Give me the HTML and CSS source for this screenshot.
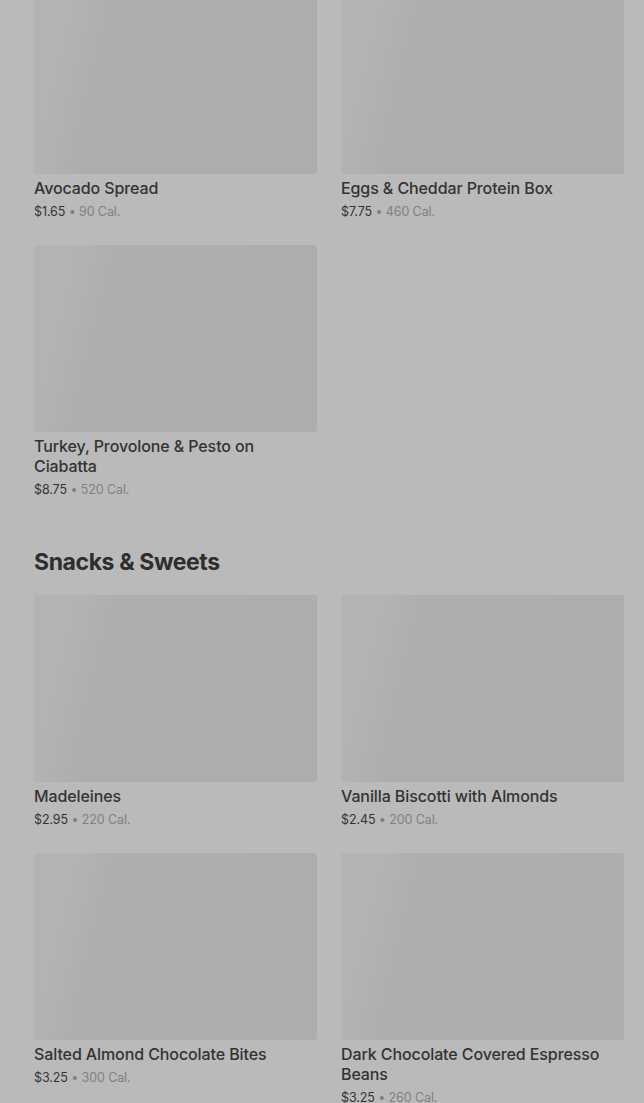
FILE: index.html
```html
<!DOCTYPE html>
<html>
<head>
<meta charset="utf-8">
<link rel="stylesheet" href="styles.css">
</head>
<body>
<main class="menu">
  <section class="section first">
    <div class="grid">
      <div class="card">
        <div class="thumb"></div>
        <div class="title">Avocado Spread</div>
        <div class="meta"><span class="price">$1.65</span> <span class="cal">• 90 Cal.</span></div>
      </div>
      <div class="card">
        <div class="thumb"></div>
        <div class="title">Eggs &amp; Cheddar Protein Box</div>
        <div class="meta"><span class="price">$7.75</span> <span class="cal">• 460 Cal.</span></div>
      </div>
      <div class="card">
        <div class="thumb"></div>
        <div class="title">Turkey, Provolone &amp; Pesto on Ciabatta</div>
        <div class="meta"><span class="price">$8.75</span> <span class="cal">• 520 Cal.</span></div>
      </div>
    </div>
  </section>
  <section class="section">
    <h2 class="heading">Snacks &amp; Sweets</h2>
    <div class="grid">
      <div class="card">
        <div class="thumb"></div>
        <div class="title">Madeleines</div>
        <div class="meta"><span class="price">$2.95</span> <span class="cal">• 220 Cal.</span></div>
      </div>
      <div class="card">
        <div class="thumb"></div>
        <div class="title">Vanilla Biscotti with Almonds</div>
        <div class="meta"><span class="price">$2.45</span> <span class="cal">• 200 Cal.</span></div>
      </div>
      <div class="card">
        <div class="thumb"></div>
        <div class="title">Salted Almond Chocolate Bites</div>
        <div class="meta"><span class="price">$3.25</span> <span class="cal">• 300 Cal.</span></div>
      </div>
      <div class="card">
        <div class="thumb"></div>
        <div class="title">Dark Chocolate Covered Espresso Beans</div>
        <div class="meta"><span class="price">$3.25</span> <span class="cal">• 260 Cal.</span></div>
      </div>
    </div>
  </section>
</main>
</body>
</html>
```
FILE: styles.css
```css
html, body {
  margin: 0;
  padding: 0;
  background: #bababa;
  overflow: hidden;
}
body {
  font-family: Inter, "Liberation Sans", Arial, sans-serif;
  color: #2e2e2e;
}
.menu {
  padding: 0 20px 0 34px;
}
.section.first {
  margin-top: -13px;
}
.grid {
  display: grid;
  grid-template-columns: 283px 283px;
  column-gap: 24px;
  row-gap: 24px;
  align-items: start;
}
.thumb {
  height: 187px;
  border-radius: 2px;
  background: linear-gradient(104deg, #b3b3b3 0%, #b3b3b3 14%, #aeaeae 26%, #adadad 100%);
}
.title {
  margin-top: 4px;
  font-size: 16px;
  line-height: 20px;
  font-weight: 500;
  color: #333333;
  letter-spacing: -0.1px;
}
.meta {
  margin-top: 4px;
  font-size: 12.5px;
  line-height: 19px;
  letter-spacing: -0.1px;
}
.price {
  color: #333333;
}
.cal {
  color: #808080;
}
.heading {
  margin: 47px 0 17px;
  font-size: 23px;
  line-height: 32px;
  font-weight: 700;
  color: #2e2e2e;
  letter-spacing: -0.4px;
}
```
